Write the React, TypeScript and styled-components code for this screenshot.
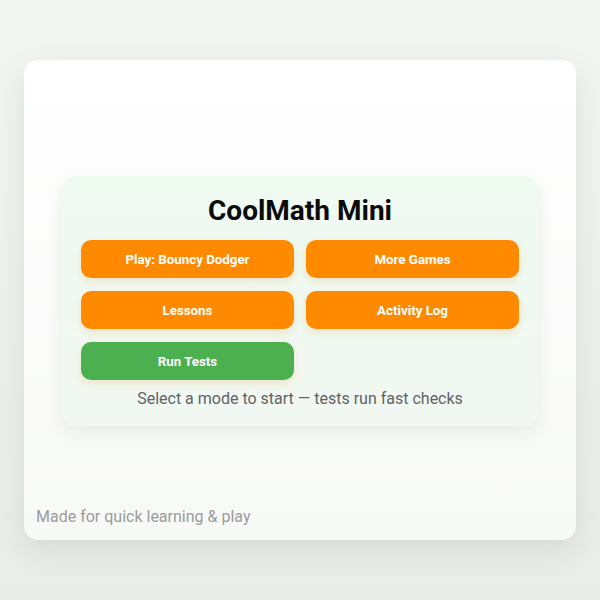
import styled, { createGlobalStyle } from "styled-components"

const GlobalStyle = createGlobalStyle`
  html, body {
    margin: 0;
    padding: 0;
  }
  body {
    font-family: Roboto, "Liberation Sans", Arial, sans-serif;
    background: linear-gradient(180deg, #f3f5f1 0%, #e8ede7 100%);
    min-height: 600px;
  }
`

const Page = styled.div`
  width: 600px;
  height: 600px;
  padding: 60px 24px;
  box-sizing: border-box;
`

const Card = styled.div`
  height: 480px;
  box-sizing: border-box;
  padding: 12px;
  border-radius: 14px;
  background: linear-gradient(180deg, #ffffff 0%, #f7f9f6 100%);
  box-shadow: 0 10px 30px rgba(40, 60, 40, 0.1);
  display: grid;
  grid-template-rows: 1fr auto 1fr;
  justify-items: center;
`

const Panel = styled.section`
  width: 476px;
  box-sizing: border-box;
  margin-top: 2px;
  padding: 18px 19px;
  border-radius: 14px;
  background: linear-gradient(180deg, #effaf1 0%, #f2f8f1 100%);
  box-shadow: 0 6px 18px rgba(30, 50, 30, 0.08);
  display: flex;
  flex-direction: column;
  align-items: stretch;
`

const Title = styled.h1`
  margin: 0 0 13px;
  font-size: 28px;
  line-height: 33px;
  font-weight: 700;
  color: #0b0b0b;
  text-align: center;
`

const ButtonGrid = styled.div`
  display: grid;
  grid-template-columns: 1fr 1fr;
  column-gap: 12px;
  row-gap: 13px;
`

const ModeButton = styled.button<{ $variant?: "orange" | "green" }>`
  height: 38px;
  border: none;
  border-radius: 10px;
  font-family: inherit;
  font-size: 13.3px;
  font-weight: 700;
  color: #ffffff;
  background: ${(p) => (p.$variant === "green" ? "#4caf50" : "#ff8a00")};
  box-shadow: 0 4px 10px rgba(230, 150, 40, 0.18);
  cursor: pointer;
`

const Hint = styled.p`
  margin: 9px 0 0;
  font-size: 16px;
  line-height: 19px;
  color: #5f6368;
  text-align: center;
`

const Footer = styled.div`
  justify-self: start;
  align-self: end;
  font-size: 16px;
  line-height: 19px;
  color: #9c9c9c;
  padding-bottom: 2px;
`

const modes = ["Play: Bouncy Dodger", "More Games", "Lessons", "Activity Log"]

export default function App() {
  return (
    <>
      <GlobalStyle />
      <Page>
        <Card>
          <div />
          <Panel>
            <Title>CoolMath Mini</Title>
            <ButtonGrid>
              {modes.map((m) => (
                <ModeButton key={m}>{m}</ModeButton>
              ))}
              <ModeButton $variant="green">Run Tests</ModeButton>
            </ButtonGrid>
            <Hint>Select a mode to start — tests run fast checks</Hint>
          </Panel>
          <Footer>Made for quick learning &amp; play</Footer>
        </Card>
      </Page>
    </>
  )
}
